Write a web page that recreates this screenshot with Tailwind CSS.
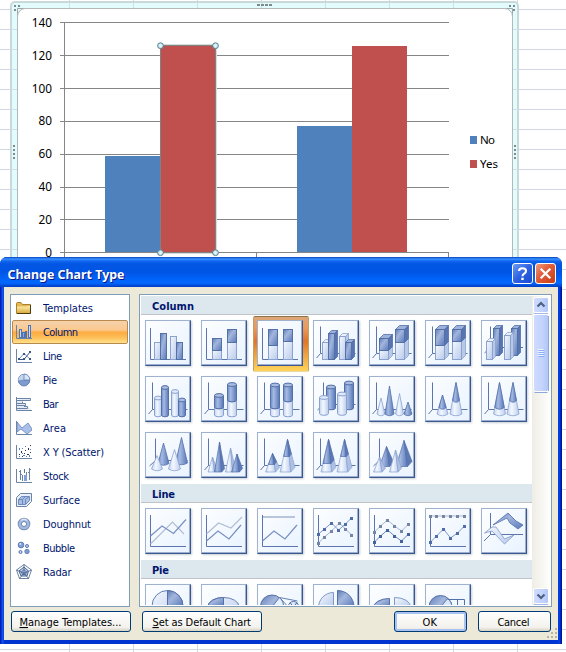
<!DOCTYPE html>
<html lang="en">
<head>
<meta charset="utf-8">
<title>Change Chart Type</title>
<script src="https://cdn.jsdelivr.net/npm/@tailwindcss/browser@4"></script>
</head>
<body class="relative w-[566px] h-[652px] overflow-hidden bg-white font-['DejaVu_Sans_Condensed','DejaVu_Sans',sans-serif] text-[11px] text-black">

<svg class="absolute inset-0" width="566" height="652" viewBox="0 0 566 652">
  <defs>
    <pattern id="rows" width="566" height="20" y="9" patternUnits="userSpaceOnUse"><rect width="566" height="1" fill="#d0d7e5"/></pattern>
    <pattern id="cols" width="64" height="652" x="5" patternUnits="userSpaceOnUse"><rect width="1" height="652" fill="#d0d7e5"/></pattern>
    <radialGradient id="knob"><stop offset="0" stop-color="#e8ffff"/><stop offset="1" stop-color="#b8dce4"/></radialGradient>
  </defs>
  <rect width="566" height="652" fill="url(#rows)"/>
  <rect x="60" width="470" height="652" fill="url(#cols)"/>
  <!-- chart frame -->
  <rect x="11" y="2" width="507" height="300" rx="4" fill="#e2fbfc" stroke="#c9d8d9" stroke-width="2"/>
  <g fill="#d0dfe8">
    <path d="M69 3h1v5h-1zM133 3h1v5h-1zM197 3h1v5h-1zM261 3h1v5h-1zM325 3h1v5h-1zM389 3h1v5h-1zM453 3h1v5h-1z"/>
    <path d="M12 29h5v1h-5zM12 49h5v1h-5zM12 69h5v1h-5zM12 89h5v1h-5zM12 109h5v1h-5zM12 129h5v1h-5zM12 169h5v1h-5zM12 189h5v1h-5zM12 209h5v1h-5zM12 229h5v1h-5zM12 249h5v1h-5z"/>
    <path d="M513 29h5v1h-5zM513 49h5v1h-5zM513 69h5v1h-5zM513 89h5v1h-5zM513 109h5v1h-5zM513 129h5v1h-5zM513 169h5v1h-5zM513 189h5v1h-5zM513 209h5v1h-5zM513 229h5v1h-5zM513 249h5v1h-5z"/>
  </g>
  <path d="M17.500 300V8.500H512.500V300" fill="#e2fbfc" stroke="#a0a5a5"/>
  <rect x="17.500" y="8.500" width="495" height="300" rx="8" fill="#fff" stroke="#b4b8b8"/>
  <g fill="#808a8c">
    <path d="M257 4h3v2h-3zM261 4h3v2h-3zM265 4h3v2h-3zM269 4h3v2h-3z"/>
    <path d="M13 145h2v2h-2zM13 149h2v2h-2zM13 153h2v2h-2zM13 157h2v2h-2z"/>
    <path d="M514 145h2v2h-2zM514 149h2v2h-2zM514 153h2v2h-2zM514 157h2v2h-2z"/>
    <path d="M14 5h2v2h-2zM18 5h2v2h-2zM14 9h2v2h-2zM509 5h2v2h-2zM513 5h2v2h-2zM513 9h2v2h-2z"/>
  </g>
  <!-- plot area -->
  <path d="M60 22.500H449M60 55.500H449M60 88.500H449M60 121.500H449M60 154.500H449M60 187.500H449M60 219.500H449M60 252.500H449M64.500 22V260M256.500 252V260M448.500 252V260" stroke="#868686" fill="none"/>
  <rect x="105" y="156" width="56" height="96" fill="#4f81bd"/>
  <rect x="297" y="126" width="55" height="126" fill="#4f81bd"/>
  <rect x="352" y="46" width="55" height="206" fill="#c0504d"/>
  <rect x="161" y="46" width="54" height="206" fill="#c0504d"/>
  <path d="M160 44.500H216M216.500 45V253M160 253.500H216" fill="none" stroke="#d5dcdc"/>
  <rect x="160.500" y="45.500" width="55" height="207" fill="none" stroke="#828282"/>
  <g fill="url(#knob)" stroke="#5d7f93"><circle cx="160.500" cy="45.700" r="2.900"/><circle cx="215.500" cy="45.700" r="2.900"/><circle cx="160.500" cy="252.700" r="2.900"/><circle cx="215.500" cy="252.700" r="2.900"/></g>
  <g class="font-['Noto_Sans',sans-serif] text-[11.8px]" text-anchor="end">
    <text x="52" y="27">140</text><text x="52" y="60">120</text><text x="52" y="93">100</text><text x="52" y="125">80</text><text x="52" y="158">60</text><text x="52" y="191">40</text><text x="52" y="224">20</text><text x="52" y="257">0</text>
  </g>
  <rect x="470" y="136" width="7" height="8" fill="#4f81bd"/>
  <rect x="470" y="160" width="7" height="8" fill="#c0504d"/>
  <g class="font-['Noto_Sans',sans-serif] text-[11.5px]"><text x="480" y="144" textLength="15">No</text><text x="480" y="168" textLength="18">Yes</text></g>
</svg>

<section class="absolute left-0 top-[257px] w-[562px] h-[387px] flex flex-col rounded-t-[7px] overflow-hidden bg-[linear-gradient(90deg,#0010a8_0,#0a45e6_2px,#1660f0_3px,#0034d0_4px,#0034d0_558px,#0048f0_559px,#001bb0_561px,#000d80_562px)]">
  <header class="h-[30px] shrink-0 flex items-center pl-[7px] pr-[6px] bg-[linear-gradient(180deg,#0440c0_0,#3a93ff_2px,#1267f2_4px,#0256e2_7px,#0055e5_15px,#0165fb_23px,#0167ff_26px,#0052e0_28px,#003cc0_30px)]">
    <svg width="130" height="30" class="font-['Noto_Sans',sans-serif] text-[13px] font-bold">
      <text x="1.500" y="23" fill="#0a1883" textLength="117" lengthAdjust="spacingAndGlyphs">Change Chart Type</text>
      <text x="0.500" y="22" fill="#fff" textLength="117" lengthAdjust="spacingAndGlyphs">Change Chart Type</text>
    </svg>
    <div class="ml-auto flex gap-[2px] pt-[3px]">
      <svg width="21" height="21"><defs><linearGradient id="hb" x2="1" y2="1"><stop stop-color="#6f9cf5"/><stop offset=".5" stop-color="#2f62e2"/><stop offset="1" stop-color="#1648cc"/></linearGradient><linearGradient id="cb" x2="1" y2="1"><stop stop-color="#f0a184"/><stop offset=".4" stop-color="#e2603c"/><stop offset="1" stop-color="#c63a12"/></linearGradient></defs><rect x=".5" y=".5" width="20" height="20" rx="2.500" fill="url(#hb)" stroke="#fff"/><path d="M7 8Q7 5.200 10.500 5.200T14 8Q14 9.600 12.200 10.600Q10.500 11.600 10.500 13.200" fill="none" stroke="#fff" stroke-width="2.100"/><rect x="9.300" y="14.700" width="2.400" height="2.300" fill="#fff"/></svg>
      <svg width="21" height="21"><rect x=".5" y=".5" width="20" height="20" rx="2.500" fill="url(#cb)" stroke="#fff"/><path d="M5.700 5.700L15.300 15.300M15.300 5.700L5.700 15.300" stroke="#fff" stroke-width="2.300"/></svg>
    </div>
  </header>

  <main class="relative mx-[4px] h-[353px] bg-[#ece9d8] pt-[7px] pl-[6px]">
    <div class="flex gap-[9px]">
      <ul id="kinds" class="w-[120px] h-[313px] border border-[#7f9db9] bg-white pt-px px-px"></ul>
      <div class="w-[413px] h-[313px] border border-[#7f9db9] bg-white p-px flex">
        <div id="gallery" class="w-[392px] h-[309px] overflow-hidden"></div>
        <div class="w-[18px] h-[309px] flex flex-col bg-[linear-gradient(90deg,#eeede5,#fefefb)] pl-px pr-px">
          <svg width="16" height="309">
            <defs><linearGradient id="sb" x2="1"><stop stop-color="#cfdcfe"/><stop offset=".6" stop-color="#c3d3fd"/><stop offset="1" stop-color="#b0c4f5"/></linearGradient></defs>
            <rect x=".5" y="1.500" width="15" height="15" rx="2" fill="url(#sb)" stroke="#fff"/><path d="M1 17.500H15" stroke="#a3b9e4"/>
            <path d="M4.500 10.500L8 7L11.500 10.500" fill="none" stroke="#4d6185" stroke-width="2.200"/>
            <rect x=".5" y="18.500" width="15" height="77" rx="2" fill="url(#sb)" stroke="#fff"/><path d="M1.500 96.500H14.500M15.500 20V95" stroke="#8fa8dc"/>
            <path d="M4.500 53.500h6M4.500 55.500h6M4.500 57.500h6M4.500 59.500h6" stroke="#eef4fe"/><path d="M5.500 54.500h6M5.500 56.500h6M5.500 58.500h6M5.500 60.500h6" stroke="#8cb0f8"/>
            <rect x=".5" y="292.500" width="15" height="15" rx="2" fill="url(#sb)" stroke="#fff"/><path d="M1 308.500H15" stroke="#a3b9e4"/>
            <path d="M4.500 298.500L8 302L11.500 298.500" fill="none" stroke="#4d6185" stroke-width="2.200"/>
          </svg>
        </div>
      </div>
    </div>
    <div class="flex pt-[4px] pl-px">
      <button class="w-[120px] h-[21px] rounded-[3px] border border-[#003c74] bg-[linear-gradient(#fff,#f3f2ed_80%,#d9d2c4)]"><svg width="118" height="19"><text x="7.500" y="14" textLength="102"><tspan text-decoration="underline">M</tspan>anage Templates...</text></svg></button>
      <button class="ml-[11px] w-[120px] h-[21px] rounded-[3px] border border-[#003c74] bg-[linear-gradient(#fff,#f3f2ed_80%,#d9d2c4)]"><svg width="118" height="19"><text x="9.500" y="14" textLength="98.500"><tspan text-decoration="underline">S</tspan>et as Default Chart</text></svg></button>
      <button class="ml-[132px] w-[73px] h-[21px] rounded-[3px] border border-[#003c74] bg-[linear-gradient(#fff,#f3f2ed_80%,#e5e0d5)] shadow-[inset_0_0_0_2px_#a9c2f2,inset_0_-2px_0_#6982ee]"><svg width="71" height="19"><text x="27.500" y="14" textLength="14.500">OK</text></svg></button>
      <button class="ml-[11px] w-[73px] h-[21px] rounded-[3px] border border-[#003c74] bg-[linear-gradient(#fff,#f3f2ed_80%,#d9d2c4)]"><svg width="71" height="19"><text x="18.500" y="14" textLength="32">Cancel</text></svg></button>
    </div>
    <svg class="absolute right-0 bottom-px" width="12" height="12"><path d="M9 1h2v2h-2zM5 5h2v2h-2zM9 5h2v2h-2zM1 9h2v2h-2zM5 9h2v2h-2zM9 9h2v2h-2z" fill="#b8b4a2"/></svg>
  </main>
</section>

<svg class="absolute" width="0" height="0">
  <defs>
    <linearGradient id="L" x2="1" y2="1"><stop stop-color="#f4f8ff"/><stop offset="1" stop-color="#b9caea"/></linearGradient>
    <linearGradient id="D" x2="1" y2="1"><stop stop-color="#5f7db8"/><stop offset=".4" stop-color="#a3b6dc"/><stop offset="1" stop-color="#5b7aba"/></linearGradient>
    <linearGradient id="CL" x2="1"><stop stop-color="#c3d2ee"/><stop offset=".4" stop-color="#f3f8ff"/><stop offset="1" stop-color="#bccdec"/></linearGradient>
    <linearGradient id="CD" x2="1"><stop stop-color="#6b8ac6"/><stop offset=".35" stop-color="#a6bbe3"/><stop offset="1" stop-color="#5877b8"/></linearGradient>
    <linearGradient id="folder" x2="0" y2="1"><stop stop-color="#fff3b8"/><stop offset="1" stop-color="#d9a735"/></linearGradient>
    <linearGradient id="face" x1="0" y1="0" x2="1" y2="1"><stop stop-color="#fdfeff"/><stop offset="1" stop-color="#e9f3ff"/></linearGradient>
  </defs>
</svg>

<script>
const edge = {L: '#8ba2cf', D: '#5370a9'};
const AX = '#5c76ad';
const path = (d, s, w = 1, f = 'none') => `<path d="${d}" fill="${f}" stroke="${s}" stroke-width="${w}" stroke-linejoin="round"/>`;
const axis2 = path('M5.500 8V39.500H41', AX);
const axisLine = path('M5.500 7V38.500H41', AX);
const axis3 = path('M7.500 6.500V33.500H42.500M7.500 33.500L3.500 38', AX);
const axisDeep = path('M10.500 6.500V28.500H42.500M10.500 28.500L4.500 34', AX);
const bar = (x, y, w, k, b = 39.5) => `<rect x="${x}" y="${y}" width="${w}" height="${b - y}" fill="url(#${k})" stroke="${edge[k]}"/>`;
const stack = (x, y, w, s) => bar(x, s, w, 'L') + bar(x, y, w, 'D', s);
function cube(x, y, w, k, b = 39.5, d = 3) {
  return path(`M${x} ${y}l${d} ${-d}h${w}l${-d} ${d}z`, edge[k], .8, k === 'D' ? '#9db2da' : '#e9f1fd')
    + path(`M${x + w} ${y}l${d} ${-d}V${b - d}L${x + w} ${b}z`, edge[k], .8, k === 'D' ? '#5875b2' : '#b8c9e8') + bar(x, y, w, k, b);
}
const cubes = (x, y, w, s) => cube(x, s, w, 'L', 39.5, 4) + cube(x, y, w, 'D', s, 4);
function cyl(x, x2, y, k, b = 39) {
  const r = (x2 - x) / 2;
  return `<path d="M${x} ${y}V${b}A${r} 1.800 0 0 0 ${x2} ${b}V${y}z" fill="url(#C${k})" stroke="${edge[k]}"/>
  <ellipse cx="${x + r}" cy="${y}" rx="${r}" ry="1.900" fill="${k === 'D' ? '#a9bbdf' : '#dfe9f9'}" stroke="${edge[k]}"/>`;
}
const cyls = (x, x2, y, s) => cyl(x, x2, s, 'L') + cyl(x, x2, y, 'D', s);
const cone = (c, w, y, k, b = 38.5) => `<path d="M${c} ${y}L${c - w / 2} ${b - .5}Q${c} ${b + 3} ${c + w / 2} ${b - .5}z" fill="url(#C${k})" stroke="${edge[k]}" stroke-width=".8" stroke-linejoin="round"/>`;
function cones(c, w, y, s) { return cone(c, w, y, 'L') + cone(c, w * (s - y) / (38.5 - y), y, 'D', s); }
function pyr(c, w, y, k, b = 40) {
  const l = c - w / 2, r = c + w / 2, m = c + w * .22;
  return `<path d="M${c} ${y}L${l} ${b}H${m}z" fill="url(#C${k})" stroke="${edge[k]}" stroke-width=".7" stroke-linejoin="round"/>
  <path d="M${c} ${y}L${m} ${b}L${r} ${b - w * .32}z" fill="${k === 'D' ? '#5c79b6' : '#aec1e5'}" stroke="${edge[k]}" stroke-width=".7" stroke-linejoin="round"/>`;
}
function pyrs(c, w, y, s) { return pyr(c, w, y, 'L') + pyr(c, w * (s - y) / (40 - y), y, 'D', s); }
const DK = '#7891c2', PL = '#b1bed5';
const line = (p, s, w = 1.2) => `<polyline points="${p}" fill="none" stroke="${s}" stroke-width="${w}"/>`;
const dots = (p, s, m) => line(p, s, 1) + p.split(' ').map(q => { const [a, b] = q.split(','); return `<rect x="${Math.floor(a) - 1}" y="${b - 1}" width="3" height="3" fill="${m}"/>`; }).join('');

const groups = [
 ['Column', [
  axis2 + bar(9.5, 22.5, 6, 'L') + bar(15.5, 13.5, 6, 'D') + bar(25.5, 16.5, 6, 'L') + bar(31.5, 22.5, 6, 'D'),
  axis2 + stack(11.5, 18.5, 9, 30.5) + stack(26.5, 9.5, 9, 22.5),
  axis2 + stack(11.5, 9.5, 9, 25.5) + stack(26.5, 9.5, 9, 21.5),
  axis3 + cube(9.5, 22.5, 6, 'L') + cube(15.5, 13.5, 6, 'D') + cube(26.5, 16.5, 6, 'L') + cube(32.5, 22.5, 6, 'D'),
  axis3 + cubes(10.5, 18.5, 9, 30.5) + cubes(26.5, 9.5, 9, 22.5),
  axis3 + cubes(10.5, 9.5, 9, 25.5) + cubes(27.5, 9.5, 9, 21.5),
  path('M9.500 6.500V27.500H42M9.500 27.500L3.500 33', AX) + cube(12.5, 8.5, 6, 'D', 35.5) + cube(30.5, 8.5, 6, 'D', 35.5) + cube(5.5, 21.5, 6, 'L') + cube(23.5, 15.5, 6, 'L'),
  axis3 + cyl(9.5, 16.5, 22, 'L') + cyl(16.5, 23.5, 11.5, 'D') + cyl(26.5, 33.5, 15.5, 'L') + cyl(33.5, 40.5, 24, 'D'),
  axis3 + cyls(13.5, 22.5, 19.5, 31) + cyls(26.5, 35.5, 8.5, 24),
  axis3 + cyls(13.5, 22.5, 9, 31) + cyls(26.5, 35.5, 9, 24),
  axisDeep + cyl(13.5, 22.5, 11, 'D', 32) + cyl(31.5, 40.5, 7, 'D', 32) + cyl(6.5, 15.5, 21.5, 'L', 37.5) + cyl(24.5, 33.5, 18, 'L', 37.5),
  axis3 + cone(12, 8, 22, 'L') + cone(20.5, 9, 10, 'D') + cone(30.5, 8, 17.5, 'L') + cone(39, 8, 26, 'D'),
  axis3 + cones(17.5, 11, 19, 32) + cones(31, 12, 6.5, 25),
  axis3 + cones(18.5, 12, 6.5, 32) + cones(32, 12, 6.5, 25),
  axisDeep + cone(18.5, 11, 11, 'D', 32) + cone(36.5, 12, 5.5, 'D', 31.5) + cone(12, 11, 23.5, 'L', 37.5) + cone(29.5, 12, 17.5, 'L', 37.5),
  axis3 + pyr(11.5, 9, 25, 'L') + pyr(18.5, 10, 10, 'D') + pyr(29.5, 10, 16, 'L') + pyr(36, 11, 22, 'D'),
  axis3 + pyrs(15.5, 14, 21.5, 32.5) + pyrs(30.5, 15, 7.5, 24.5),
  axis3 + pyrs(15.5, 15, 7.5, 31.5) + pyrs(31.5, 15, 7.5, 24.5),
  axisDeep + pyr(17.5, 14, 14.5, 'D', 34.5) + pyr(35, 16, 8.5, 'D', 34.5) + pyr(10.5, 12, 25, 'L') + pyr(26.5, 12, 18, 'L')
 ]],
 ['Line', [
  axisLine + line('5.5,36 27.5,14 39,26', PL) + line('5.5,28 17,18 28.5,25.5 41,11.5', DK),
  axisLine + line('5.5,26 17.5,15 30,20 41,9', PL) + line('5.5,33 17,23 28,31 40,17', DK),
  axisLine + line('6,9 38,9', '#b8c5da', 2) + line('5.5,33 17,23 28,31 40,17', DK),
  axisLine + dots('5.5,35 11.5,29 18.5,23 26.5,15 32.5,21 38.5,27', '#9fb0cd', '#7486a3') + dots('5.5,26 11.5,21 18.5,15 25.5,22 32.5,16 38.5,10', '#7e97c8', '#4f6da6'),
  axisLine + dots('5.5,24 11.5,18 18.5,12 25.5,18 32.5,23 39.5,16', '#a9b7cf', '#7486a3') + dots('5.5,34 11.5,28 18.5,22 25.5,28 32.5,33 39.5,26', '#6d89c0', '#44639c'),
  axisLine + dots('5.5,8 11.5,8 18.5,8 25.5,8 32.5,8 39.5,8', '#a9b7cf', '#7486a3') + dots('5.5,34 11.5,28 18.5,21 25.5,30 32.5,25 39.5,18', '#7e97c8', '#4f6da6'),
  path('M9.500 5V26.500H42M9.500 26.500L3 33', AX) + path('M12 17L27 5L35 13L42 17L37 21L29 15L26 10z', '#4f6ea9', .8, 'url(#D)') + path('M3.500 25L11 19H15L23.500 31L33 27L23.500 36L11 23z', '#8098c8', .8, 'url(#L)')
 ]],
 ['Pie', [
  `<circle cx="22.500" cy="22" r="15.500" fill="url(#L)" stroke="#6580b4"/>` + path('M22.500 6.500A15.500 15.500 0 0 1 38 22H22.500z', '#5470a8', 1, 'url(#D)'),
  `<ellipse cx="22.500" cy="22.500" rx="15.500" ry="9" fill="url(#L)" stroke="#6580b4"/>` + path('M22.500 13.500A15.500 9 0 0 0 7 22.500H22.500z', '#5470a8', 1, 'url(#D)'),
  `<circle cx="15" cy="22.500" r="11.500" fill="url(#D)" stroke="#5470a8"/>` + path('M22.500 13.500A11.500 11.500 0 0 1 26 25L15 23z', '#6580b4', 1, '#e7f0fd') + path('M22.500 13.500L40.500 17M22.500 13.500Q28 19 31 23', '#6580b4') + `<circle cx="36.500" cy="22.500" r="5" fill="url(#L)" stroke="#5470a8"/>` + path('M33 18.500L36.500 23L40 18.500', '#5470a8'),
  path('M20.500 8.500A15 15 0 0 0 5.500 24H20.500z', '#8098c8', 1, 'url(#L)') + path('M24.500 6.500A16.500 16.500 0 0 1 41 23H24.500z', '#5470a8', 1, 'url(#D)'),
  path('M20.500 14.500A16 9 0 0 0 4.500 24H20.500z', '#5470a8', 1, 'url(#D)') + path('M25.500 13.500A16 9 0 0 1 41.500 23H25.500z', '#8098c8', 1, 'url(#L)'),
  `<circle cx="15.500" cy="23" r="11.500" fill="url(#D)" stroke="#5470a8"/>` + path('M22.500 14.500A11.500 11.500 0 0 1 27 24H15z', '#6580b4', 1, '#dbe7f9') + path('M22.500 15.500H39.500V25M32.500 15.500V25', '#5470a8')
 ]]
];

document.getElementById('gallery').innerHTML = groups.map(([name, icons], g) => `
  <h2 class="h-[19px] bg-[#dde7ee] border-b border-[#c0c4c8] pl-[11px] flex items-center"><svg width="60" height="18" class="font-bold text-[11px]" fill="#00156e"><text x="0" y="14" textLength="${[42, 23, 17][g]}">${name}</text></svg></h2>
  <div class="grid grid-cols-[repeat(7,46px)] gap-[10px] pl-[4px] pt-[5px] pb-[6px]">${icons.map((s, i) => `
    <div class="relative w-[46px] h-[46px] ${g === 0 && i === 2 ? '' : 'shadow-[1px_1px_2px_#c8ccd2]'}">
      ${g === 0 && i === 2 ? '<span class="absolute -left-[4px] -top-[4px] w-[56px] h-[56px] border border-[#b9a06c] border-t-[#8d7448] border-b-[#e8d9a0] rounded-[2px] bg-[linear-gradient(#dba678_0,#ea9a5c_20%,#e07528_45%,#eb9a3e_65%,#ffd45a_100%)]"></span>' : ''}
      <svg class="relative block" width="46" height="46"><rect width="46" height="46" fill="#3d5990"/><path d="M0 46V0H46L45 1L1 45z" fill="#a0b2cf"/><rect x="1" y="1" width="44" height="44" fill="#c5d5ec"/><rect x="1" y="1" width="43" height="43" fill="url(#face)"/><path d="M45 1V45H1" fill="none" stroke="#3d5990" stroke-width=".6"/>${s}</svg>
    </div>`).join('')}</div>`).join('');

const ic = '#6b84a5';
const kinds = [
 ['Templates', 50, '<path d="M.5 3.500Q.5 2.500 1.500 2.500H5L6.500 4.500H14.500V13.500H.5z" fill="#e3b84f" stroke="#aa8030"/><path d="M1 6.500H11.500L14.500 5.500V13.500H1z" fill="url(#folder)"/><path d="M1 13.500H14.500V5" fill="none" stroke="#4c3b18"/>'],
 ['Column', 35, path('M.5 1V14.500H16', ic) + '<rect x="3.500" y="5.500" width="2" height="8" fill="#cfdef5" stroke="#4e74b8"/><rect x="6.500" y="8.500" width="2" height="5" fill="#8aa9df" stroke="#4e74b8"/><rect x="9.500" y="7.500" width="1" height="6" fill="#fff" stroke="#4e74b8"/><rect x="12.500" y="1.500" width="2" height="12" fill="#cfdef5" stroke="#4e74b8"/>'],
 ['Line', 19, path('M.5 1V14.500H16', ic) + path('M3 11.500H8L14 4', '#395684') + path('M3 11L8 5.500L14 11', '#6e92b5') + '<path d="M2 10h2v2h-2zM7 5h2v2h-2zM13 10h2v2h-2zM13 3h2v2h-2zM7 10h2v2h-2z" fill="#395684"/>'],
 ['Pie', 14, '<circle cx="8" cy="8" r="5.700" fill="url(#L)" stroke="#6681ac"/><path d="M8 8V2.500A5.500 5.500 0 0 0 2.500 9Q3 8.500 8 8z" fill="#c3d4f0"/><path d="M8 8L2.500 9A5.500 5.500 0 0 0 13.500 8z" fill="#7d9bd1" stroke="#6681ac" stroke-width=".7"/><path d="M8 2V8H14A6 6 0 0 0 8 2z" fill="#d6e4fa" stroke="#6681ac" stroke-width=".8"/>'],
 ['Bar', 15.5, path('M.5 1V14.500H16M.5 2.500H14.500V4.500H.5M.5 7.500H6.500V5.500M.5 9.500H9.500V7.500H6.500M.5 12.500H11.500V10.500H8', ic, 1, '#e3eaf5')],
 ['Area', 23, '<path d="M1 2L6 8L12 3L16 9V10L11 14L5 9L1 12z" fill="#a9bfe9" stroke="#6685b8" stroke-width=".8"/>' + path('M.5 1V14.500H16', ic)],
 ['X Y (Scatter)', 61, path('M.5 1V14.500H16', ic) + '<path d="M3 10h1v1h-1zM5 7h1v2h-1zM9 6h1v1h-1zM12 4h1v2h-1zM14 1h1v1h-1zM6 12h1v1h-1zM11 10h2v1h-2zM14 8h1v1h-1zM8 9h1v1h-1z" fill="#26364f"/><path d="M3 4h1v2h-1zM6 4h1v1h-1zM9 2h1v1h-1zM14 5h1v1h-1zM3 12h1v1h-1zM7 11h2v1h-2zM10 12h1v1h-1zM13 11h1v2h-1zM6 9h1v1h-1z" fill="#5d7dc4"/>'],
 ['Stock', 26, path('M.5 1V14.500H16M4.500 2V12M3 3.500H4.500M4.500 6.500H6M13.500 0V12M12 4.500H13.500M13.500 1.500H15M10.500 4V13M6.500 7V13', ic) + '<rect x="8" y="7" width="3" height="6" fill="#7fa0da"/><path d="M8 1h1v4h-1z" fill="#5b7596"/>'],
 ['Surface', 37, path('M.5 5.500L4.500 1.500H15.500V9.500L10.500 14.500H.5z', ic, 1, '#e9eff8') + path('M2.500 12.500V7.500L5.500 4.500H13.500V8.500L9.500 12.500zM2.500 7.500H6.500V12M6.500 7.500L9 5M9.500 12V7.500L13 4.500', '#6c8abb', 1, '#a9bee3')],
 ['Doughnut', 48, '<circle cx="8" cy="8" r="4.200" fill="none" stroke="#6681ac" stroke-width="4.200"/><circle cx="8" cy="8" r="4.200" fill="none" stroke="#a3b8dd" stroke-width="2.800"/><path d="M5 4.500Q8 2 11 4.500" fill="none" stroke="#dce7f8" stroke-width="1.300"/>'],
 ['Bubble', 32, '<circle cx="5" cy="5" r="2.900" fill="#7d9cd8" stroke="#5572aa" stroke-width=".8"/><circle cx="4.300" cy="4" r="1" fill="#d5e3fb"/><g fill="#c8d7f2" stroke="#5572aa"><circle cx="11" cy="6" r="1.500"/><circle cx="4.500" cy="12" r="1.500"/></g><circle cx="11" cy="11.500" r="2.200" fill="#7d9cd8" stroke="#5572aa" stroke-width=".8"/>'],
 ['Radar', 28.5, path('M8 .5L15.500 6L12.500 14.500H3.500L.5 6z', ic) + path('M8 3L12.500 7L11 12H5L3 7z', '#4c6690', 1, '#b5c8ea') + path('M8 .5V9L15.500 6M8 9L12.500 14.500M8 9L3.500 14.500M8 9L.5 6M8 5.500L10.500 8L9.500 10.500H6.500L5.500 8z', '#47608a', .8)]
];
document.getElementById('kinds').innerHTML = kinds.map(([name, w, s], i) => `
  <li class="h-[24px] flex items-center border rounded-[2px] pl-[3px] ${i === 1 ? 'border-[#b98a4c] bg-[linear-gradient(#f5d2ac_0,#fbc98e_40%,#fdac42_52%,#fdbf58_75%,#ffe18c_100%)]' : 'border-transparent'}">
    <svg width="16" height="16">${s}</svg>
    <svg class="ml-[11px]" width="74" height="22" fill="#00156e"><text x="0" y="15" textLength="${w}">${name}</text></svg>
  </li>`).join('');
</script>
</body>
</html>
